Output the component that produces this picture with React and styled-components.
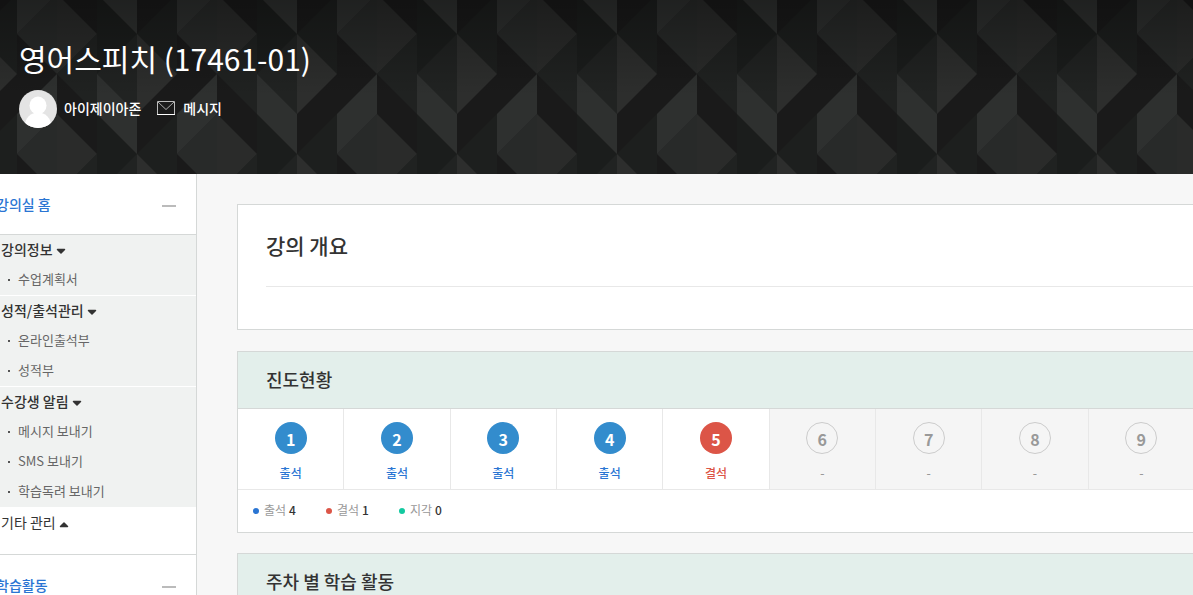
import { useState } from "react";
import styled, { createGlobalStyle, css } from "styled-components";

const GlobalStyle = createGlobalStyle`
  * {
    box-sizing: border-box;
  }
  body {
    margin: 0;
    background-color: #f7f7f7;
    color: #333;
    font-family: "Noto Sans CJK KR", "Noto Sans", sans-serif;
    font-size: 14px;
    line-height: 20px;
  }
  h1, h2, ul, p {
    margin: 0;
    padding: 0;
  }
  ul {
    list-style: none;
  }
`;

const Page = styled.div`
  height: 100vh;
  overflow: hidden;
  display: flex;
  flex-direction: column;
`;

const Banner = styled.header`
  position: relative;
  flex: none;
  padding: 36px 19px 46px;
  color: white;
  background-color: #1a1a1a;
`;

const Pattern = styled.svg`
  position: absolute;
  inset: 0;
  width: 100%;
  height: 100%;
`;

const Title = styled.h1`
  position: relative;
  font-size: 30px;
  line-height: 44px;
  font-weight: 400;
`;

const Professor = styled.div`
  position: relative;
  display: flex;
  align-items: center;
  margin-top: 10px;
  font-weight: 500;
`;

const Avatar = styled.svg`
  width: 38px;
  height: 38px;
  margin-right: 7px;
`;

const Name = styled.span`
  padding-bottom: 2px;
`;

const MessageLink = styled.a`
  display: flex;
  align-items: center;
  gap: 8px;
  margin-left: 16px;
  padding-bottom: 2px;
  color: inherit;
  text-decoration: none;
`;

const Body = styled.div`
  flex: 1;
  min-height: 0;
  display: flex;
`;

const Sidebar = styled.nav`
  flex: none;
  width: 221px;
  margin-left: -24px;
  background-color: white;
  border-right: 1px solid #d5d8d7;
`;

const SectionButton = styled.button`
  all: unset;
  box-sizing: border-box;
  display: flex;
  align-items: center;
  justify-content: space-between;
  width: 100%;
  height: 60px;
  padding: 0 20px;
  color: #2a75d3;
  font-weight: 500;
  cursor: pointer;
`;

const Minus = styled.span`
  width: 14px;
  height: 2px;
  margin-top: 4px;
  background-color: #bbb;
`;

const Groups = styled.div`
  border-top: 1px solid #d5d8d7;
  border-bottom: 1px solid #d5d8d7;
`;

const Group = styled.div`
  background-color: ${(props) => (props.$open ? "#f0f2f1" : "white")};
  padding-bottom: ${(props) => (props.$open ? "0" : "16px")};
  & + & {
    border-top: 1px solid white;
  }
`;

const GroupButton = styled.button`
  all: unset;
  box-sizing: border-box;
  display: flex;
  align-items: center;
  gap: 3px;
  width: 100%;
  height: 30px;
  padding: 0 0 2px 25px;
  font-weight: ${(props) => (props.$open ? 500 : 400)};
  cursor: pointer;
`;

const CaretIcon = styled.svg`
  width: 10px;
  height: 7px;
  margin-top: 4px;
`;

const MenuLink = styled.a`
  display: flex;
  align-items: center;
  height: 30px;
  padding: 0 0 2px 32px;
  color: #666;
  font-size: 13px;
  text-decoration: none;
  &::before {
    content: "";
    width: 2px;
    height: 2px;
    margin: 2px 8px 0 0;
    background-color: #555;
  }
`;

const Content = styled.main`
  flex: 1;
  min-width: 0;
  padding: 30px 0 0 40px;
`;

const Card = styled.section`
  margin: 0 -3px 20px 0;
  background-color: white;
  border: 1px solid #d5d8d7;
`;

const IntroCard = styled(Card)`
  margin-bottom: 21px;
`;

const IntroTitle = styled.h2`
  margin-left: 28px;
  padding: 24px 0;
  border-bottom: 1px solid #e8e8e8;
  font-size: 21px;
  line-height: 33px;
  font-weight: 500;
`;

const IntroText = styled.p`
  min-height: 42px;
`;

const CardTitle = styled.h2`
  padding: 13px 28px 15px;
  background-color: #e3efeb;
  border-bottom: 1px solid #d5d8d7;
  font-size: 18px;
  line-height: 28px;
  font-weight: 500;
`;

const Weeks = styled.ul`
  display: grid;
  grid-template-columns: repeat(9, 1fr);
  border-bottom: 1px solid #e8e8e8;
`;

const tones = {
  present: css`
    color: #2a75d3;
    --fill: #338ccd;
  `,
  absent: css`
    color: #dc5547;
    --fill: #dc5547;
  `,
  none: css`
    color: #999;
    background-color: #f5f5f5;
  `,
};

const Week = styled.li`
  display: flex;
  flex-direction: column;
  align-items: center;
  gap: 9px;
  height: 80px;
  padding-top: 13px;
  border-right: 1px solid #e8e8e8;
  font-size: 12px;
  font-weight: 500;
  ${(props) => tones[props.$status]}
`;

const WeekNumber = styled.span`
  width: 32px;
  height: 32px;
  border-radius: 50%;
  text-align: center;
  font-size: 16px;
  line-height: 34px;
  font-weight: 700;
  color: white;
  background-color: var(--fill);
  ${(props) =>
    props.$status === "none" &&
    css`
      border: 1px solid #ccc;
      color: #999;
      line-height: 32px;
    `}
`;

const Legend = styled.ul`
  display: flex;
  gap: 30px;
  padding: 10px 15px 12px;
  font-size: 12px;
`;

const LegendItem = styled.li`
  display: flex;
  align-items: center;
  gap: 3px;
  color: #999;
  &::before {
    content: "";
    width: 6px;
    height: 6px;
    margin: 2px 2px 0 0;
    border-radius: 50%;
    background-color: ${(props) => props.$color};
  }
`;

const Count = styled.span`
  color: #333;
  font-weight: 500;
`;

const groups = [
  { name: "강의정보", open: true, items: ["수업계획서"] },
  { name: "성적/출석관리", open: true, items: ["온라인출석부", "성적부"] },
  {
    name: "수강생 알림",
    open: true,
    items: ["메시지 보내기", "SMS 보내기", "학습독려 보내기"],
  },
  { name: "기타 관리", open: false, items: [] },
];

const weeks = [
  "present",
  "present",
  "present",
  "present",
  "absent",
  "none",
  "none",
  "none",
  "none",
];

const labels = { present: "출석", absent: "결석", none: "-" };

const BannerPattern = () => (
  <Pattern aria-hidden="true">
    <defs>
      <pattern
        id="facets"
        x="57"
        y="-6"
        width="160"
        height="120"
        patternUnits="userSpaceOnUse"
      >
        <rect width="160" height="120" fill="#1a1a1a" />
        <path d="M0 0L40 40L0 80z" fill="#2a2b2a" />
        <path d="M40 40V120L0 80z" fill="#202221" />
        <path d="M40 0L80 40L40 80z" fill="#1b1d1c" />
        <path d="M80 40V120L40 80z" fill="#212322" />
        <path d="M40 80L80 120H40zM40 0H80V40z" fill="#2e302f" />
        <path d="M80 40L120 0V80z" fill="#1d1f1e" />
        <path d="M80 40L120 80L80 120z" fill="#2d2e2d" />
        <path d="M120 40L160 0V80z" fill="#282a29" />
        <path d="M120 120L160 80V120zM120 0H160L120 40z" fill="#2e302f" />
      </pattern>
      <linearGradient id="shade" x1="0" y1="0" x2="0" y2="1">
        <stop offset="0" stopColor="#000" stopOpacity="0.32" />
        <stop offset="0.55" stopColor="#000" stopOpacity="0" />
      </linearGradient>
    </defs>
    <rect width="100%" height="100%" fill="url(#facets)" />
    <rect width="100%" height="100%" fill="url(#shade)" />
  </Pattern>
);

const Caret = ({ up }) => (
  <CaretIcon viewBox="0 0 10 7" aria-hidden="true">
    <path
      d={up ? "M1.5 5.5h7L5 2z" : "M1.5 1.5h7L5 5z"}
      fill="#333"
      stroke="#333"
      strokeWidth="1.5"
      strokeLinejoin="round"
    />
  </CaretIcon>
);

function App() {
  const [open, setOpen] = useState(groups.map((group) => group.open));

  const toggleHandler = (index) => {
    setOpen(open.map((value, i) => (i === index ? !value : value)));
  };

  return (
    <Page>
      <GlobalStyle />
      <Banner>
        <BannerPattern />
        <Title>영어스피치 (17461-01)</Title>
        <Professor>
          <Avatar viewBox="0 0 38 38" aria-hidden="true">
            <clipPath id="face">
              <circle cx="19" cy="19" r="19" />
            </clipPath>
            <g clipPath="url(#face)">
              <rect width="38" height="38" fill="#e4e4e4" />
              <ellipse cx="19" cy="15.5" rx="8.5" ry="9" fill="white" />
              <ellipse cx="19" cy="35" rx="13" ry="12.5" fill="white" />
            </g>
          </Avatar>
          <Name>아이제이아존</Name>
          <MessageLink href="#message">
            <svg width="18" height="14" viewBox="0 0 18 14" fill="none">
              <path d="M.5 13.5V.5h17v13" stroke="#bbb" />
              <path d="M1 1l8 7.5L17 1" stroke="#aaa" />
              <path d="M0 13.5h18" stroke="white" />
            </svg>
            메시지
          </MessageLink>
        </Professor>
      </Banner>
      <Body>
        <Sidebar>
          <SectionButton>
            강의실 홈<Minus />
          </SectionButton>
          <Groups>
            {groups.map((group, index) => (
              <Group key={group.name} $open={open[index]}>
                <GroupButton
                  $open={open[index]}
                  onClick={() => toggleHandler(index)}
                >
                  {group.name}
                  <Caret up={!open[index]} />
                </GroupButton>
                {open[index] &&
                  group.items.map((item) => (
                    <MenuLink key={item} href="#menu">
                      {item}
                    </MenuLink>
                  ))}
              </Group>
            ))}
          </Groups>
          <SectionButton>
            학습활동
            <Minus />
          </SectionButton>
        </Sidebar>
        <Content>
          <IntroCard>
            <IntroTitle>강의 개요</IntroTitle>
            <IntroText />
          </IntroCard>
          <Card>
            <CardTitle>진도현황</CardTitle>
            <Weeks>
              {weeks.map((status, index) => (
                <Week key={index} $status={status}>
                  <WeekNumber $status={status}>{index + 1}</WeekNumber>
                  {labels[status]}
                </Week>
              ))}
            </Weeks>
            <Legend>
              <LegendItem $color="#2a75d3">
                출석 <Count>4</Count>
              </LegendItem>
              <LegendItem $color="#dc5547">
                결석 <Count>1</Count>
              </LegendItem>
              <LegendItem $color="#13c9a0">
                지각 <Count>0</Count>
              </LegendItem>
            </Legend>
          </Card>
          <Card>
            <CardTitle>주차 별 학습 활동</CardTitle>
          </Card>
        </Content>
      </Body>
    </Page>
  );
}

export default App;
